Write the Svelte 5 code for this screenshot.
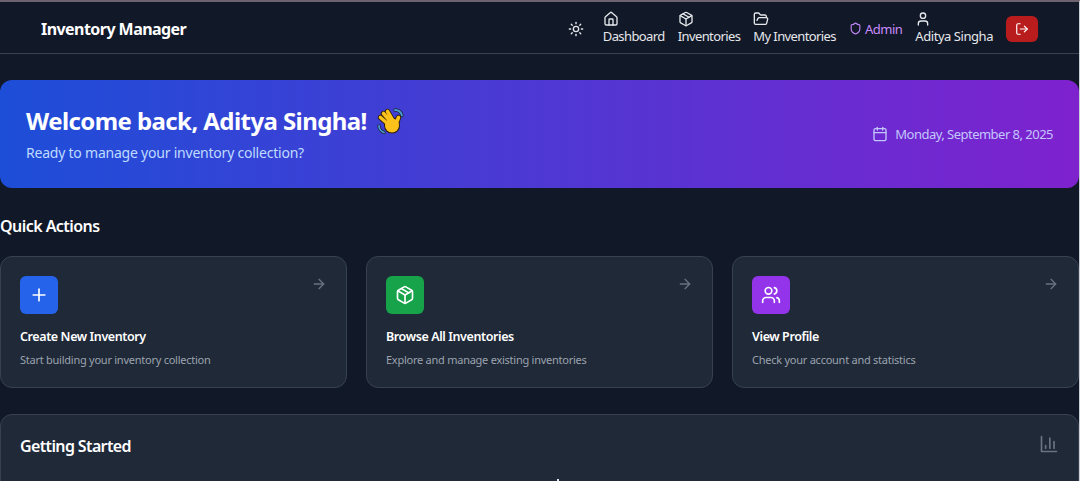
<script>
    const icons = {
        sun: ["M8 12a4 4 0 1 0 8 0a4 4 0 1 0-8 0", "M12 2v2", "M12 20v2", "m4.93 4.93 1.41 1.41", "m17.66 17.66 1.41 1.41", "M2 12h2", "M20 12h2", "m6.34 17.66-1.41 1.41", "m19.07 4.93-1.41 1.41"],
        house: ["M15 21v-8a1 1 0 0 0-1-1h-4a1 1 0 0 0-1 1v8", "M3 10a2 2 0 0 1 .709-1.528l7-5.999a2 2 0 0 1 2.582 0l7 5.999A2 2 0 0 1 21 10v9a2 2 0 0 1-2 2H5a2 2 0 0 1-2-2z"],
        box: ["M11 21.73a2 2 0 0 0 2 0l7-4A2 2 0 0 0 21 16V8a2 2 0 0 0-1-1.73l-7-4a2 2 0 0 0-2 0l-7 4A2 2 0 0 0 3 8v8a2 2 0 0 0 1 1.73z", "M12 22V12", "m3.3 7 8.7 5 8.7-5", "m7.5 4.27 9 5.15"],
        folder: ["m6 14 1.5-2.9A2 2 0 0 1 9.24 10H20a2 2 0 0 1 1.94 2.5l-1.54 6a2 2 0 0 1-1.95 1.5H4a2 2 0 0 1-2-2V5a2 2 0 0 1 2-2h3.9a2 2 0 0 1 1.69.9l.81 1.2a2 2 0 0 0 1.67.9H18a2 2 0 0 1 2 2v2"],
        shield: ["M20 13c0 5-3.5 7.5-7.66 8.95a1 1 0 0 1-.67-.01C7.5 20.5 4 18 4 13V6a1 1 0 0 1 1-1c2 0 4.5-1.2 6.24-2.72a1.17 1.17 0 0 1 1.52 0C14.51 3.81 17 5 19 5a1 1 0 0 1 1 1z"],
        user: ["M19 21v-2a4 4 0 0 0-4-4H9a4 4 0 0 0-4 4v2", "M8 7a4 4 0 1 0 8 0a4 4 0 1 0-8 0"],
        logout: ["M9 21H5a2 2 0 0 1-2-2V5a2 2 0 0 1 2-2h4", "m16 17 5-5-5-5", "M21 12H9"],
        calendar: ["M8 2v4", "M16 2v4", "M5 4h14a2 2 0 0 1 2 2v14a2 2 0 0 1-2 2H5a2 2 0 0 1-2-2V6a2 2 0 0 1 2-2z", "M3 10h18"],
        plus: ["M5 12h14", "M12 5v14"],
        arrow: ["M5 12h14", "m12 5 7 7-7 7"],
        users: ["M16 21v-2a4 4 0 0 0-4-4H6a4 4 0 0 0-4 4v2", "M16 3.128a4 4 0 0 1 0 7.744", "M22 21v-2a4 4 0 0 0-3-3.87", "M5 7a4 4 0 1 0 8 0a4 4 0 1 0-8 0"],
        chart: ["M3 3v18h18", "M18 17V9", "M13 17V5", "M8 17v-3"]
    };

    const links = [
        { icon: "house", label: "Dashboard" },
        { icon: "box", label: "Inventories" },
        { icon: "folder", label: "My Inventories" }
    ];

    const actions = [
        { icon: "plus", color: "blue", title: "Create New Inventory", text: "Start building your inventory collection" },
        { icon: "box", color: "green", title: "Browse All Inventories", text: "Explore and manage existing inventories" },
        { icon: "users", color: "purple", title: "View Profile", text: "Check your account and statistics" }
    ];

    // the waving hand: fingers and thumb are drawn twice, dark then yellow
    const fingers = "M3.500 10.500 11 17M6.500 6.500 13 14M10.500 4.500 15.500 13M21.500 10.500 19 17";
</script>

{#snippet icon(name, size)}
    <svg width={size} height={size} viewBox="0 0 24 24" fill="none" stroke="currentColor" stroke-width="2" stroke-linecap="round" stroke-linejoin="round">
        {#each icons[name] as d}
            <path {d} />
        {/each}
    </svg>
{/snippet}

<div class="page">
    <header>
        <span class="brand">Inventory Manager</span>
        <nav>
            <button class="theme">{@render icon("sun", 16)}</button>
            {#each links as link}
                <a class="link" href="#top">
                    {@render icon(link.icon, 16)}
                    <span>{link.label}</span>
                </a>
            {/each}
            <a class="admin" href="#top">{@render icon("shield", 13)}<span>Admin</span></a>
            <a class="link user" href="#top">
                {@render icon("user", 16)}
                <span>Aditya Singha</span>
            </a>
            <button class="logout">{@render icon("logout", 14)}</button>
        </nav>
    </header>

    <main>
        <section class="banner">
            <div>
                <h1>Welcome back, Aditya Singha!
                    <svg width="28" height="28" viewBox="0 0 28 28" fill="none" stroke-linecap="round">
                        <path d="M18 3c3 0 6 2 7 5.500" stroke="#1f2937" stroke-width="3.400" />
                        <path d="M18 3c3 0 6 2 7 5.500" stroke="#4a9bd9" stroke-width="1.800" />
                        <path d="M2 19c0 2.500 2 5.500 5 6.500" stroke="#1f2937" stroke-width="3.400" />
                        <path d="M2 19c0 2.500 2 5.500 5 6.500" stroke="#4a9bd9" stroke-width="1.800" />
                        <path d={fingers} stroke="#2a1d0a" stroke-width="5.400" />
                        <circle cx="15" cy="18.500" r="8" fill="#2a1d0a" />
                        <path d={fingers} stroke="#fcc21b" stroke-width="3.600" />
                        <circle cx="15" cy="18.500" r="7" fill="#fcc21b" />
                    </svg>
                </h1>
                <p>Ready to manage your inventory collection?</p>
            </div>
            <div class="date">{@render icon("calendar", 16)}<span>Monday, September 8, 2025</span></div>
        </section>

        <h2>Quick Actions</h2>
        <div class="cards">
            {#each actions as action}
                <div class="card">
                    <div class="top">
                        <div class={"tile " + action.color}>{@render icon(action.icon, 20)}</div>
                        <span class="go">{@render icon("arrow", 16)}</span>
                    </div>
                    <h3>{action.title}</h3>
                    <p>{action.text}</p>
                </div>
            {/each}
        </div>

        <section class="started">
            <h2>Getting Started</h2>
            <span class="chart">{@render icon("chart", 20)}</span>
            <span class="clipped"></span>
        </section>
    </main>
</div>

<style>
    :global(body) {
        background: #111827;
    }

    .page {
        height: 481px;
        overflow: hidden;
        box-sizing: border-box;
        border-top: 2px solid #6f6270;
        border-right: 1px solid #c9ced6;
        background: #111827;
        color: #fff;
        font-family: "Noto Sans", "Open Sans", sans-serif;
    }

    svg {
        display: block;
    }

    header {
        height: 52px;
        box-sizing: border-box;
        display: flex;
        align-items: center;
        justify-content: space-between;
        padding: 2px 41px 0;
        border-bottom: 1px solid #374151;
    }

    .brand {
        font-size: 16px;
        font-weight: 700;
        letter-spacing: -0.55px;
    }

    nav {
        display: flex;
        align-items: center;
        gap: 13px;
    }

    .theme, .logout {
        border: none;
        padding: 0;
        display: flex;
        align-items: center;
        justify-content: center;
        cursor: pointer;
    }

    .theme {
        background: none;
        color: #e5e7eb;
        margin-right: 6px;
    }

    .logout {
        width: 32px;
        height: 26px;
        border-radius: 6px;
        background: #b91c1c;
        color: #fff;
    }

    .link {
        display: flex;
        flex-direction: column;
        align-items: flex-start;
        margin-top: -2px;
        color: #e5e7eb;
        text-decoration: none;
        font-size: 13px;
        line-height: 18px;
        letter-spacing: -0.6px;
    }

    .link.user {
        letter-spacing: -0.45px;
    }

    .admin {
        display: flex;
        align-items: center;
        gap: 3px;
        color: #c98bfd;
        text-decoration: none;
        font-size: 13px;
        letter-spacing: -0.5px;
    }

    main {
        padding-top: 26px;
    }

    .banner {
        height: 108px;
        box-sizing: border-box;
        display: flex;
        align-items: center;
        justify-content: space-between;
        padding: 0 26px;
        border-radius: 12px;
        background: linear-gradient(to right, #1d4ed8, #7e22ce);
    }

    h1 {
        margin: 0;
        display: flex;
        align-items: center;
        gap: 10px;
        font-size: 24px;
        line-height: 32px;
        font-weight: 700;
        letter-spacing: -0.58px;
    }

    .banner p {
        margin: 6px 0 0;
        font-size: 14px;
        line-height: 20px;
        color: #bfdbfe;
        letter-spacing: -0.22px;
    }

    .date {
        display: flex;
        align-items: center;
        gap: 7px;
        font-size: 13px;
        color: #c3c6fd;
        letter-spacing: -0.52px;
    }

    main > h2 {
        margin: 26px 0 18px;
        font-size: 16px;
        line-height: 24px;
        font-weight: 600;
        letter-spacing: -0.55px;
    }

    .cards {
        display: grid;
        grid-template-columns: repeat(3, 1fr);
        gap: 19px;
    }

    .card {
        height: 132px;
        box-sizing: border-box;
        padding: 19px;
        border: 1px solid #374151;
        border-radius: 12px;
        background: #1f2937;
    }

    .top {
        display: flex;
        justify-content: space-between;
        align-items: flex-start;
    }

    .tile {
        width: 38px;
        height: 38px;
        display: flex;
        align-items: center;
        justify-content: center;
        border-radius: 6px;
    }

    .blue { background: #2563eb; }
    .green { background: #16a34a; }
    .purple { background: #9333ea; }

    .go {
        color: #6b7280;
    }

    h3 {
        margin: 14px 0 0;
        font-size: 12.5px;
        line-height: 18px;
        font-weight: 600;
        letter-spacing: -0.4px;
    }

    .card p {
        margin: 6px 0 0;
        font-size: 11px;
        line-height: 16px;
        color: #9ca3af;
        letter-spacing: -0.25px;
    }

    .started {
        position: relative;
        margin-top: 26px;
        height: 100px;
        box-sizing: border-box;
        padding: 19px;
        display: flex;
        justify-content: space-between;
        align-items: flex-start;
        border: 1px solid #374151;
        border-radius: 12px;
        background: #1f2937;
    }

    .started h2 {
        margin: 0;
        font-size: 16px;
        line-height: 24px;
        font-weight: 600;
        letter-spacing: -0.63px;
    }

    .chart {
        color: #6b7280;
    }

    .clipped {
        position: absolute;
        left: 556px;
        top: 64px;
        width: 2px;
        height: 4px;
        background: #e5e7eb;
    }
</style>
